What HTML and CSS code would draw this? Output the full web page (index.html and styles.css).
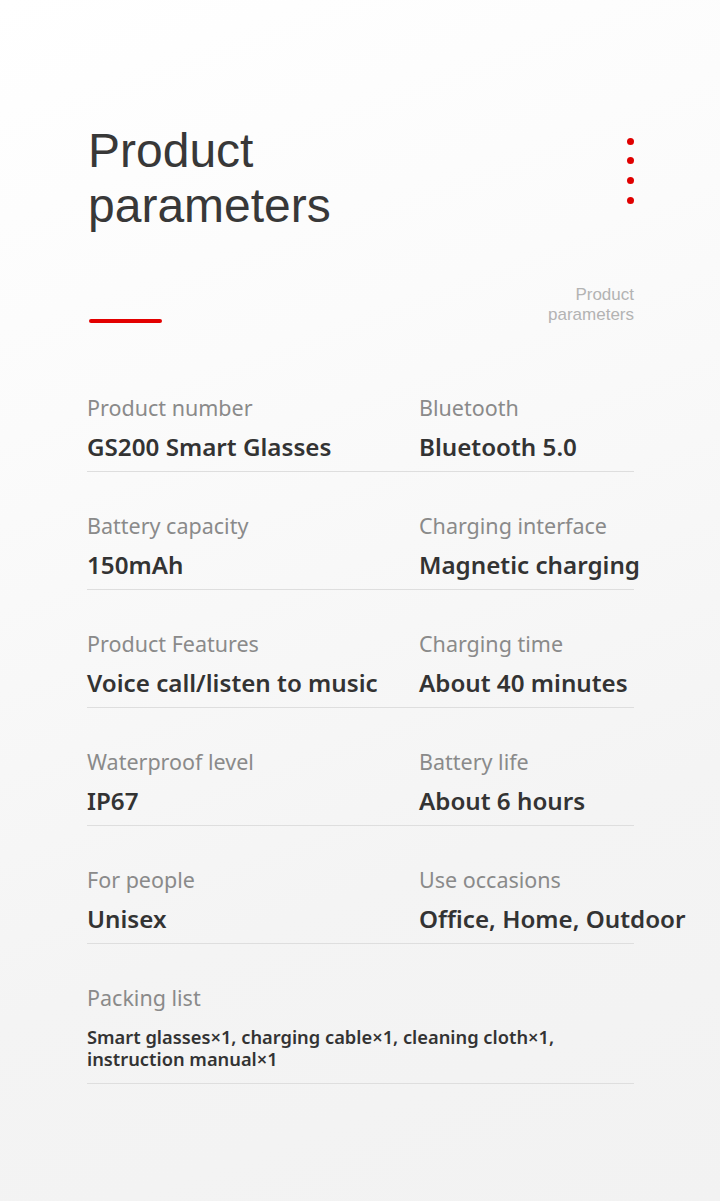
FILE: index.html
```html
<!DOCTYPE html>
<html lang="en">
<head>
<meta charset="utf-8">
<title>Product parameters</title>
<link rel="stylesheet" href="styles.css">
</head>
<body>
<main class="page">
  <header class="head">
    <h1 class="title">Product<br>parameters</h1>
    <div class="dots"><span></span><span></span><span></span><span></span></div>
  </header>
  <div class="sub">
    <div class="redline"></div>
    <div class="subtext">Product<br>parameters</div>
  </div>
  <section class="specs">
    <div class="row">
      <div class="cell"><div class="label">Product number</div><div class="value">GS200 Smart Glasses</div></div>
      <div class="cell"><div class="label">Bluetooth</div><div class="value">Bluetooth 5.0</div></div>
    </div>
    <div class="row">
      <div class="cell"><div class="label">Battery capacity</div><div class="value">150mAh</div></div>
      <div class="cell"><div class="label">Charging interface</div><div class="value">Magnetic charging</div></div>
    </div>
    <div class="row">
      <div class="cell"><div class="label">Product Features</div><div class="value">Voice call/listen to music</div></div>
      <div class="cell"><div class="label">Charging time</div><div class="value">About 40 minutes</div></div>
    </div>
    <div class="row">
      <div class="cell"><div class="label">Waterproof level</div><div class="value">IP67</div></div>
      <div class="cell"><div class="label">Battery life</div><div class="value">About 6 hours</div></div>
    </div>
    <div class="row">
      <div class="cell"><div class="label">For people</div><div class="value">Unisex</div></div>
      <div class="cell"><div class="label">Use occasions</div><div class="value">Office, Home, Outdoor</div></div>
    </div>
    <div class="row single">
      <div class="cell"><div class="label">Packing list</div><div class="text">Smart glasses×1, charging cable×1, cleaning cloth×1,<br>instruction manual×1</div></div>
    </div>
  </section>
</main>
</body>
</html>
```

FILE: styles.css
```css
html, body {
  margin: 0;
  padding: 0;
}
body {
  width: 720px;
  min-height: 1201px;
  background: linear-gradient(160deg, #ffffff 0%, #fbfbfb 30%, #f4f4f4 70%, #f2f2f2 100%);
  font-family: "Noto Sans", Roboto, sans-serif;
}
.page {
  width: 547px;
  padding: 123px 0 0 87px;
}
.head {
  display: flex;
  justify-content: space-between;
  align-items: flex-start;
}
.title {
  margin: 0;
  font-family: "Liberation Sans", Arial, sans-serif;
  font-weight: 400;
  font-size: 48px;
  line-height: 55px;
  color: #383838;
  padding-left: 1px;
}
.dots {
  display: flex;
  flex-direction: column;
  gap: 12.7px;
  padding-top: 14.5px;
  padding-right: 0;
}
.dots span {
  display: block;
  width: 7px;
  height: 7px;
  border-radius: 50%;
  background: #e00000;
}
.sub {
  display: flex;
  justify-content: space-between;
  align-items: flex-end;
  margin-top: 52px;
}
.redline {
  width: 73px;
  height: 4px;
  border-radius: 2px;
  background: #e30000;
  margin-left: 2px;
  margin-bottom: 2px;
}
.subtext {
  text-align: right;
  font-family: "Liberation Sans", Arial, sans-serif;
  font-size: 17px;
  line-height: 20px;
  color: #b3b3b3;
}
.specs {
  margin-top: 28px;
}
.row {
  display: grid;
  grid-template-columns: 332px 215px;
  padding-top: 41px;
  padding-bottom: 9px;
  border-bottom: 1px solid #dedede;
}
.row + .row {
  padding-top: 40px;
}
.row.single {
  grid-template-columns: 547px;
  padding-bottom: 13px;
}
.cell {
  white-space: nowrap;
}
.label {
  font-size: 21.5px;
  line-height: 28px;
  font-weight: 400;
  color: #8a8a8a;
  margin-bottom: 10px;
}
.value {
  font-size: 24.2px;
  line-height: 30px;
  font-weight: 600;
  color: #333333;
}
.text {
  font-size: 18.3px;
  line-height: 22px;
  font-weight: 600;
  color: #333333;
  margin-top: 14px;
}
```
